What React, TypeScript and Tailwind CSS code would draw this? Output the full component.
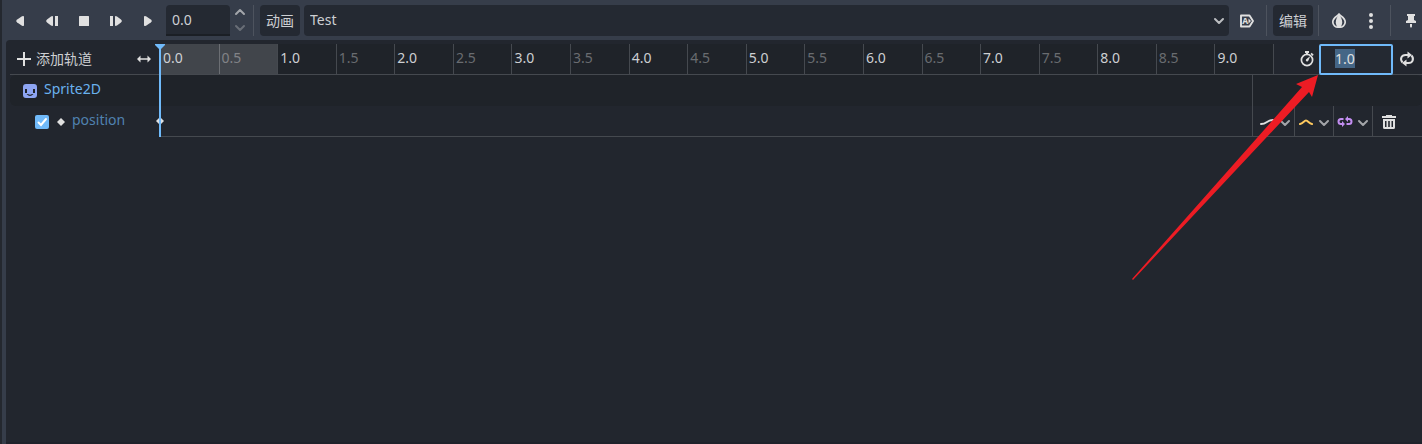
import { useEffect, useRef, type ReactNode } from 'react'
import clsx from 'clsx'

const ticks = Array.from({ length: 19 }, (_, i) => i / 2)

const Icon = ({ children, className }: { children: ReactNode; className?: string }) => (
  <svg viewBox="0 0 16 16" fill="currentColor" aria-hidden="true" className={clsx('size-4 shrink-0', className)}>
    {children}
  </svg>
)

const ChevronIcon = ({ className }: { className?: string }) => (
  <svg viewBox="0 0 12 8" fill="none" stroke="currentColor" strokeWidth="2" strokeLinecap="round" strokeLinejoin="round" aria-hidden="true" className={clsx('shrink-0', className)}>
    <path d="M2 2l4 4 4-4" />
  </svg>
)

const transport = [
  { label: '反向播放', icon: <path d="M4 8l1.2-1.4L10 3.3q2-.8 2 .4v8.6q0 1.2-2 .4L5.200 9.400z" /> },
  { label: '从当前位置反向播放', icon: <path d="M2 8l1-1.500L7 3.400q2-.8 2 .4v8.400q0 1.200-2 .4L3 9.500zM11 3h3v10h-3z" /> },
  { label: '停止', icon: <rect x="3" y="3" width="10" height="10" rx=".5" /> },
  { label: '从当前位置播放', icon: <path d="M14 8l-1-1.500L9 3.400q-2-.8-2 .4v8.400q0 1.200 2 .4L13 9.500zM2 3h3v10H2z" /> },
  { label: '播放', icon: <path d="M12 8l-1.200-1.400L6 3.300q-2-.8-2 .4v8.600q0 1.200 2 .4L10.800 9.400z" /> },
]

const IconButton = ({ label, children, className = 'w-8' }: { label: string; children: ReactNode; className?: string }) => (
  <button type="button" aria-label={label} className={clsx('flex h-full shrink-0 items-center justify-center', className)}>
    {children}
  </button>
)

const Separator = ({ className = 'ml-[3px] mr-[6px]' }: { className?: string }) => (
  <div className={clsx('h-full w-px shrink-0 bg-[#4d535e]', className)} />
)

const Toolbar = () => (
  <div className="flex h-10 items-center pt-[5px] pb-1 pl-[2px] text-[#e0e0e0]">
    {transport.map((item) => (
      <IconButton key={item.label} label={item.label}>
        <Icon>{item.icon}</Icon>
      </IconButton>
    ))}
    <input
      aria-label="当前时间"
      defaultValue="0.0"
      className="ml-[2px] h-full w-16 shrink-0 rounded-t-sm border-b-2 border-[#1b1f25] bg-[#242932] px-1.5 text-[#cdcfd2] outline-none"
    />
    <div className="flex h-full w-5 shrink-0 flex-col items-center justify-between pt-[3px] pb-1 text-[#a3a6ab]">
      <button type="button" aria-label="增加">
        <ChevronIcon className="h-2 w-3 rotate-180" />
      </button>
      <button type="button" aria-label="减少" className="text-[#696e77]">
        <ChevronIcon className="h-2 w-3" />
      </button>
    </div>
    <Separator />
    <button type="button" className="h-full w-10 shrink-0 rounded-sm bg-[#242932] text-[#cdcfd2]">动画</button>
    <div className="ml-1 grid h-full min-w-0 flex-1 items-center">
      <select
        aria-label="动画列表"
        className="col-start-1 row-start-1 h-full w-full appearance-none rounded-sm bg-[#242932] px-1.5 pb-0.5 text-[#cdcfd2] outline-none"
      >
        <option>Test</option>
      </select>
      <ChevronIcon className="pointer-events-none col-start-1 row-start-1 mr-1 h-2 w-3 justify-self-end text-[#bbbdc0]" />
    </div>
    <IconButton label="加载后自动播放" className="ml-[2px] w-8">
      <Icon>
        <path d="M2 2.500h8.500L14 8l-3.500 5.500H2z" fill="none" stroke="currentColor" strokeWidth="1.900" strokeLinejoin="round" />
        <text x="3.200" y="11" fontSize="8.500" fontWeight="700" fontFamily="Noto Sans, sans-serif">A</text>
        <path d="M9.500 5.500L12 8l-2.500 2.500z" />
      </Icon>
    </IconButton>
    <Separator />
    <button type="button" className="h-full w-10 shrink-0 rounded-sm bg-[#242932] text-[#cdcfd2]">编辑</button>
    <Separator className="mr-1 ml-[5px]" />
    <IconButton label="洋葱皮">
      <Icon>
        <path d="M8 1.200C7 3 1.800 4.300 1.800 9c0 3.200 2.700 5.200 5.200 5.200h2c2.500 0 5.200-2 5.200-5.200C14.200 4.300 9 3 8 1.200z" fill="none" stroke="currentColor" strokeWidth="1.700" />
        <path d="M8 1C6 4 4.800 6.500 4.800 9.200 4.800 11.500 5.800 13.500 7 15h2c1.200-1.500 2.200-3.500 2.200-5.800C11.200 6.500 10 4 8 1z" />
      </Icon>
    </IconButton>
    <IconButton label="动画选项">
      <Icon>
        <circle cx="8" cy="2" r="2" />
        <circle cx="8" cy="8" r="2" />
        <circle cx="8" cy="14" r="2" />
      </Icon>
    </IconButton>
    <Separator className="ml-[3px] mr-2" />
    <IconButton label="固定动画播放器" className="w-[23px]">
      <Icon>
        <path d="M4 1h8v2h-1v4l2 1v2H3V8l2-1V3H4zM7 11h2v2.500l-1 1.500-1-1.500z" />
      </Icon>
    </IconButton>
  </div>
)

const TimelineHeader = () => {
  const lengthRef = useRef<HTMLInputElement>(null)

  useEffect(() => {
    lengthRef.current?.focus()
    lengthRef.current?.select()
  }, [])

  return (
    <div className="flex h-[31px] border-b border-[#45494f] bg-[#1f2329] text-[#e0e0e0]">
      <div className="flex w-[150px] shrink-0 items-center justify-between bg-[#22262e] pr-2 pl-1.5">
        <button type="button" className="flex items-center gap-1 text-[#cdcfd2]">
          <Icon className="text-[#e0e0e0]">
            <path d="M7 1h2v6h6v2H9v6H7V9H1V7h6z" />
          </Icon>
          添加轨道
        </button>
        <Icon>
          <path d="M4.500 4.500v2.700h7V4.500L15 8l-3.500 3.500V8.800h-7v2.700L1 8z" />
        </Icon>
      </div>
      <div className="grid min-w-0 flex-1 grid-cols-19">
        {ticks.map((time) => (
          <div
            key={time}
            className={clsx(
              'border-l pt-1 pl-0.5 leading-5',
              time < 1 ? 'border-[#6b6e73] bg-[#41454b]' : 'border-[#45494f]',
              time % 1 === 0 ? 'text-[#cdcfd2]' : time < 1 ? 'text-[#818387]' : 'text-[#696c70]',
            )}
          >
            {time.toFixed(1)}
          </div>
        ))}
      </div>
      <div className="flex w-[149px] shrink-0 items-center justify-end border-l border-[#45494f] bg-[#22262e] pr-[7px]">
        <label htmlFor="length" aria-label="动画长度">
          <Icon>
            <circle cx="8" cy="9" r="5.600" fill="none" stroke="currentColor" strokeWidth="1.700" />
            <path d="M6 0h4v2H9v2H7V2H6zM12.700 1.800l2 2-1.200 1.200-2-2zM7.200 8.200l3.500-2.700.3.300-1.700 3.900a1.300 1.300 0 1 1-2.100-1.500z" />
          </Icon>
        </label>
        <input
          id="length"
          ref={lengthRef}
          defaultValue="1.0"
          className="mr-1.5 ml-1 h-[31px] w-[74px] self-start rounded-xs border-2 border-[#70bafa] bg-[#242932] pb-0.5 pl-3.5 text-[#e0e0e0] outline-none selection:bg-[#456686] selection:text-[#e0e0e0]"
        />
        <button type="button" aria-label="动画循环">
          <Icon>
            <g fill="none" stroke="currentColor" strokeWidth="2">
              <path d="M3.500 11.500C.5 8 2.500 4 6.500 4H9" />
              <path d="M12.500 4.500C15.500 8 13.500 12 9.500 12H7" />
            </g>
            <path d="M8.500.5L13 4 8.500 7.500zM7.500 8.500v7L3 12z" />
          </Icon>
        </button>
      </div>
    </div>
  )
}

const trackModes = [
  {
    label: '更新模式',
    width: 'w-[42px] pl-[6px]',
    icon: <path d="M2 11c6 0 6-4 12-4" fill="none" stroke="#e0e0e0" strokeWidth="2" strokeLinecap="round" />,
  },
  {
    label: '插值模式',
    width: 'w-[39px] pl-[3px]',
    icon: <path d="M2 11c3-.5 4-3.500 6-3.500s3 3 6 3.500" fill="none" stroke="#ffca5f" strokeWidth="2" strokeLinecap="round" />,
  },
  {
    label: '循环包裹模式',
    width: 'w-[39px] pl-[3px]',
    icon: (
      <g fill="#c38ef1">
        <path d="M6.500 6H4a2.500 2.500 0 0 0 0 5h1.500M9.500 11H12a2.500 2.500 0 0 0 0-5h-1.500" fill="none" stroke="#c38ef1" strokeWidth="2" />
        <path d="M5 8l3 3-3 3zM11 3v6L8 6z" />
      </g>
    ),
  },
]

const Tracks = () => (
  <div className="text-[#e0e0e0]">
    <div className="flex h-[31px] rounded-md bg-[#1f2329]">
      <div className="flex min-w-0 flex-1 items-center pl-3">
        <Icon className="text-[#8da5f3]">
          <path
            fillRule="evenodd"
            d="M4 1a3 3 0 0 0-3 3v8a3 3 0 0 0 3 3h8a3 3 0 0 0 3-3V4a3 3 0 0 0-3-3zM3 6h2v4H3zM11 6h2v4h-2zM4.500 11H6q2 1.500 4 0h1.500q-3.500 4-7 0z"
          />
        </Icon>
        <span className="ml-1.5 pb-1 text-[#6ab2ef]">Sprite2D</span>
      </div>
      <div className="w-[170px] shrink-0 border-l border-[#45494f]" />
    </div>
    <div className="flex h-[31px]">
      <div className="flex w-[150px] shrink-0 items-center pl-6">
        <label className="grid size-4 place-items-center">
          <input
            type="checkbox"
            defaultChecked
            aria-label="启用 position 轨道"
            className="col-start-1 row-start-1 size-3.5 appearance-none rounded-xs bg-[#70bafa]"
          />
          <Icon className="pointer-events-none col-start-1 row-start-1 text-white">
            <path d="M4.500 8.500L7 11l5-6" fill="none" stroke="currentColor" strokeWidth="2" strokeLinecap="round" />
          </Icon>
        </label>
        <Icon className="ml-[3px]">
          <path d="M8 4l4 4-4 4-4-4z" />
        </Icon>
        <span className="ml-[3px] pb-1 text-[#5082b0]">position</span>
      </div>
      <div className="flex min-w-0 flex-1 border-b border-[#45494f]">
        <div className="flex flex-1 items-center">
          {/* key at 0.0, centred on the playhead */}
          <Icon className="-ml-2">
            <path d="M8 4l4 4-4 4-4-4z" />
          </Icon>
        </div>
        <div className="flex w-[170px] shrink-0">
          {trackModes.map((mode) => (
            <button
              key={mode.label}
              type="button"
              aria-label={mode.label}
              className={clsx('flex shrink-0 items-center gap-1 border-l border-[#45494f]', mode.width)}
            >
              <Icon>{mode.icon}</Icon>
              <ChevronIcon className="mt-1 h-2 w-3 text-[#a3a5a9]" />
            </button>
          ))}
          <button type="button" aria-label="移除轨道" className="flex flex-1 items-center border-l border-[#45494f] pt-0.5 pl-2">
            <Icon>
              <path d="M5 1h6v1h4v2H1V2h4z" />
              <path fillRule="evenodd" d="M2 5h12v8.500a1.500 1.500 0 0 1-1.500 1.500h-9A1.500 1.500 0 0 1 2 13.500zM4 7v6h1.500V7zM7.200 7v6h1.600V7zM10.500 7v6H12V7z" />
            </Icon>
          </button>
        </div>
      </div>
    </div>
  </div>
)

const App = () => (
  <main className="flex min-h-screen flex-col overflow-hidden border-l-2 border-[#24282f] bg-[#363d4a] font-['Noto_Sans','Noto_Sans_CJK_SC',sans-serif] text-[14px] leading-5">
    <Toolbar />
    <section className="relative ml-1 flex-1 rounded-tl-sm border-b-2 border-[#1f222b] bg-[#22262e] pt-1 pl-1">
      <TimelineHeader />
      <Tracks />
      {/* playhead */}
      <svg viewBox="0 0 10 93" fill="#70bafa" aria-hidden="true" className="pointer-events-none absolute top-1 left-[149px] h-[93px] w-[10px]">
        <path d="M0 0h10v1L6 5v88H4V5L0 1z" />
      </svg>
      <svg viewBox="0 0 190 210" fill="#ed1c24" aria-hidden="true" className="pointer-events-none absolute top-8 right-[100px] h-[210px] w-[190px]">
        <path d="M186 3L164 12l6 3L0 207l1 1L177 20l3 5z" />
      </svg>
    </section>
  </main>
)

export default App
